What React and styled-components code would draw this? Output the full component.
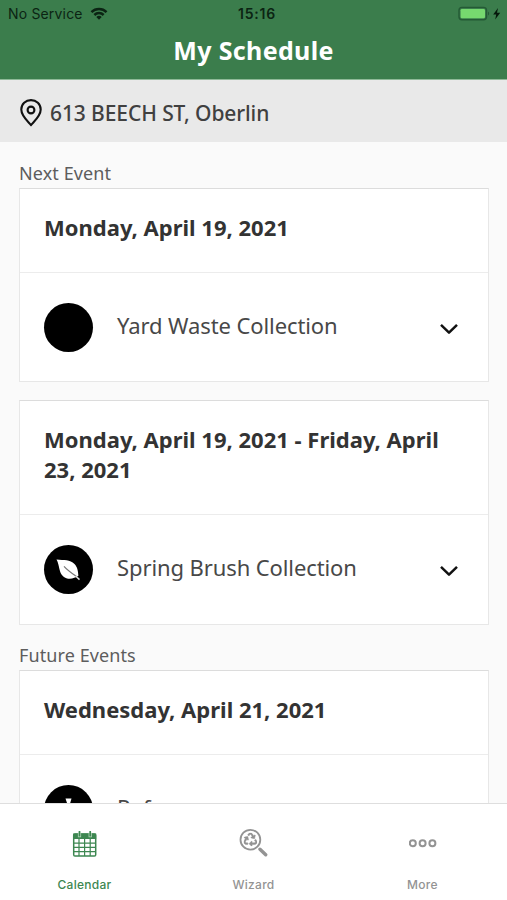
import React from "react";
import styled, { createGlobalStyle } from "styled-components";
import { FaRecycle } from "react-icons/fa";

const GlobalStyle = createGlobalStyle`
  * {
    box-sizing: border-box;
  }

  body {
    margin: 0;
    overflow: hidden;
    font-family: "Noto Sans", "Open Sans", sans-serif;
  }
`;

const Screen = styled.div`
  display: flex;
  flex-direction: column;
  width: 100%;
  height: 100vh;
  background-color: #fafafa;
`;

const Header = styled.header`
  flex: none;
  height: 80px;
  background-color: #3b7d4c;
  border-bottom: 1px solid #8fba98;
`;

const StatusBar = styled.div`
  display: grid;
  grid-template-columns: 1fr auto 1fr;
  align-items: center;
  height: 27px;
  padding: 0 5px 0 8px;
  font-family: Inter, sans-serif;
  font-size: 14px;
  color: #0b2413;
`;

const Carrier = styled.div`
  display: flex;
  align-items: center;
  gap: 7px;
  letter-spacing: 0.17px;
`;

const Clock = styled.div`
  font-weight: 600;
  letter-spacing: 0.8px;
  padding-left: 4px;
`;

const Power = styled.div`
  display: flex;
  justify-content: flex-end;
`;

const Title = styled.h1`
  margin: 0;
  font-size: 25px;
  line-height: 46px;
  font-weight: 700;
  letter-spacing: 0.35px;
  text-align: center;
  color: #fff;
`;

const AddressBar = styled.div`
  flex: none;
  display: flex;
  align-items: center;
  gap: 8px;
  height: 62px;
  padding: 3px 20px 0;
  background-color: #e9e9e9;
  color: #404040;
  font-size: 21px;
  font-weight: 500;
  letter-spacing: -0.1px;
`;

const Content = styled.main`
  flex: 1;
  min-height: 0;
  overflow: hidden;
  padding: 16px 18px 0 19px;
`;

const SectionLabel = styled.h2`
  margin: 0;
  height: 30px;
  font-size: 18px;
  line-height: 31px;
  font-weight: 400;
  letter-spacing: 0.1px;
  color: #5d5d5d;
`;

const Card = styled.section`
  margin-bottom: ${({ $last }) => ($last ? "15.5px" : "18px")};
  background-color: #fff;
  border: 1px solid #e7e7e7;
  border-top-color: #dcdcdc;
`;

const CardDate = styled.div`
  padding: 23px 24px 30px;
  font-size: 22px;
  line-height: 30px;
  font-weight: 700;
  color: #333;
  border-bottom: 1px solid #ececec;
`;

const EventRow = styled.div`
  display: flex;
  align-items: center;
  height: ${({ $last }) => ($last ? "108.5px" : "108px")};
  padding: 0 29px 0 24px;
`;

const EventIcon = styled.div`
  flex: none;
  display: flex;
  align-items: center;
  justify-content: center;
  width: 49px;
  height: 49px;
  border-radius: 50%;
  background-color: #000;
`;

const EventName = styled.div`
  flex: 1;
  padding: 0 0 4px 24px;
  font-size: 22px;
  line-height: 30px;
  letter-spacing: -0.1px;
  color: #484848;
`;

const TabBar = styled.nav`
  flex: none;
  display: grid;
  grid-template-columns: repeat(3, 1fr);
  height: 97px;
  background-color: #fff;
  border-top: 1px solid #dedede;
`;

const Tab = styled.div`
  display: flex;
  flex-direction: column;
  align-items: center;
  padding-top: 24px;
  font-family: Inter, sans-serif;
  font-size: 12px;
  line-height: 16px;
  font-weight: 500;
  letter-spacing: 0.28px;
  color: ${({ $active }) => ($active ? "#3d8751" : "#939393")};

  svg {
    margin-bottom: 20px;
  }
`;

const WifiIcon = () => (
  <svg width="18" height="13" viewBox="0 0 18 13" fill="currentColor">
    <path d="M.6 4.2a12 12 0 0 1 16.8 0l-1.7 1.8a9.6 9.6 0 0 0-13.4 0z" />
    <path d="M3.5 7.1a7.8 7.8 0 0 1 11 0l-1.7 1.8a5.4 5.4 0 0 0-7.6 0z" />
    <path d="M6.3 10a3.8 3.8 0 0 1 5.4 0L9 12.7z" />
  </svg>
);

const BatteryIcon = () => (
  <svg width="44" height="16" viewBox="0 0 44 16">
    <rect x="1" y="1.4" width="27.5" height="12.4" rx="3" fill="none" stroke="#245a35" strokeWidth="1.4" />
    <rect x="2.6" y="2.9" width="24.4" height="9.4" rx="1.4" fill="#76d96f" />
    <path d="M30 5.6v4c1.5-.6 1.5-3.4 0-4z" fill="#245a35" />
    <path d="M40 2 35.2 8.6h3l-1 5 5-6.9h-3.2z" fill="#06180b" />
  </svg>
);

const PinIcon = () => (
  <svg width="22" height="28" viewBox="0 0 22 28" fill="none" stroke="#111" strokeWidth="2.1">
    <path d="M11 26C7.6 22.1 1.3 17 1.3 10.5a9.7 9.4 0 0 1 19.4 0c0 6.5-6.3 11.6-9.7 15.5z" />
    <circle cx="11" cy="11" r="3.4" />
  </svg>
);

const ChevronIcon = () => (
  <svg width="20" height="16" viewBox="0 0 20 16" fill="none" stroke="#111" strokeWidth="2.5">
    <path d="m2 5.8 8 7.8 8-7.8" strokeLinejoin="round" />
  </svg>
);

const LeafIcon = () => (
  <svg width="49" height="49" viewBox="0 0 49 49">
    <path
      d="M12.5 14.5c7.8.8 13.4-.2 18 4.6 3.2 3.4 3.5 7.5 3.9 11.7-4.5 3.2-10.9 4.2-15.1.6-4.8-4.1-3.4-10.8-6.8-16.9z"
      fill="#fff"
    />
    <path d="M20 21.3c3.2 3.6 7.5 6.7 12.2 10" stroke="#777" strokeWidth="1.2" fill="none" />
    <path d="m31.5 31 4 3.6" stroke="#ddd" strokeWidth="1.5" />
  </svg>
);

const BagIcon = () => (
  <svg width="49" height="49" viewBox="0 0 49 49" fill="#fff">
    <path d="M21.5 13.5h6L26.2 18c8 2.5 10.1 17 4.8 18H18c-5.3-1-2.8-15.5 5-18z" />
  </svg>
);

const CalendarIcon = () => (
  <svg width="25" height="29" viewBox="0 0 25 29" fill="none" stroke="currentColor">
    <rect x="1.7" y="6" width="22" height="22" rx="1.3" strokeWidth="1.5" />
    <path d="M1.2 5.5h23V11h-23z" fill="currentColor" stroke="none" />
    <path d="M1.5 15.2h22M1.5 19.4h22M1.5 23.6h22M7 11v17M12.6 11v17M18.2 11v17" strokeWidth="1.2" />
    <path d="M7.5 4.7v4.6M18.2 4.7v4.6" stroke="#b9d9bf" strokeWidth="3.2" />
    <path d="M7.5 3v5.6M18.2 3v5.6" strokeWidth="1.7" />
  </svg>
);

const WizardIcon = () => (
  <svg width="30" height="29" viewBox="0 0 30 29" fill="none" stroke="currentColor">
    <circle cx="11.4" cy="11.7" r="9.9" strokeWidth="1.8" />
    <FaRecycle x="4.7" y="4.8" width="13.4" height="13.4" size={13.4} stroke="currentColor" strokeWidth="18" />
    <path d="m21 21.3 5.7 5.5" strokeWidth="3.4" strokeLinecap="round" />
  </svg>
);

const MoreIcon = () => (
  <svg width="28" height="29" viewBox="0 0 28 29" fill="none" stroke="currentColor" strokeWidth="2">
    <circle cx="3.8" cy="15.2" r="3" />
    <circle cx="13.6" cy="15.2" r="3" />
    <circle cx="23.4" cy="15.2" r="3" />
  </svg>
);

const EventCard = ({ date, name, icon, last = false }) => (
  <Card $last={last}>
    <CardDate>{date}</CardDate>
    <EventRow $last={last}>
      <EventIcon>{icon}</EventIcon>
      <EventName>{name}</EventName>
      <ChevronIcon />
    </EventRow>
  </Card>
);

const App = () => {
  return (
    <Screen>
      <GlobalStyle />
      <Header>
        <StatusBar>
          <Carrier>
            No Service
            <WifiIcon />
          </Carrier>
          <Clock>15:16</Clock>
          <Power>
            <BatteryIcon />
          </Power>
        </StatusBar>
        <Title>My Schedule</Title>
      </Header>
      <AddressBar>
        <PinIcon />
        613 BEECH ST, Oberlin
      </AddressBar>
      <Content>
        <SectionLabel>Next Event</SectionLabel>
        <EventCard date="Monday, April 19, 2021" name="Yard Waste Collection" />
        <EventCard
          date="Monday, April 19, 2021 - Friday, April 23, 2021"
          name="Spring Brush Collection"
          icon={<LeafIcon />}
          last
        />
        <SectionLabel>Future Events</SectionLabel>
        <EventCard date="Wednesday, April 21, 2021" name="Refuse" icon={<BagIcon />} />
      </Content>
      <TabBar>
        <Tab $active>
          <CalendarIcon />
          Calendar
        </Tab>
        <Tab>
          <WizardIcon />
          Wizard
        </Tab>
        <Tab>
          <MoreIcon />
          More
        </Tab>
      </TabBar>
    </Screen>
  );
};

export default App;
